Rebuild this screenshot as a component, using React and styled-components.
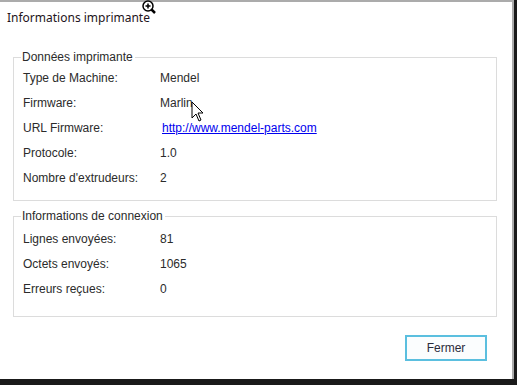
import React from "react";
import styled, { createGlobalStyle } from "styled-components";

const GlobalStyle = createGlobalStyle`
  html, body {
    margin: 0;
    padding: 0;
    background: #1a1a1a;
  }
  body {
    width: 517px;
    height: 385px;
    overflow: hidden;
  }
`;

const Screen = styled.div`
  display: flex;
  width: 517px;
  height: 385px;
  position: relative;
`;

const Window = styled.div`
  width: 512px;
  height: 377px;
  background: #ffffff;
  border-top: 2px solid #ababab;
  border-right: 2px solid #ababab;
  display: flex;
  flex-direction: column;
  font-family: "Liberation Sans", Arial, sans-serif;
  font-size: 12px;
  color: #2b2b2b;
`;

const Title = styled.div`
  font-family: "Noto Sans", "Open Sans", sans-serif;
  font-size: 12px;
  color: #1e1420;
  padding: 7px 0 0 7px;
  height: 29px;
  box-sizing: border-box;
`;

const Body = styled.div`
  display: flex;
  flex-direction: column;
  gap: 9px;
  padding: 20px 15px 0 13px;
`;

const Group = styled.fieldset`
  margin: 0;
  border: 1px solid #dcdcdc;
  padding: ${(p) => p.$top}px 0 ${(p) => p.$bottom}px 9px;
  min-width: 0;
`;

const Legend = styled.legend`
  padding: 0 2px 0 1px;
  margin-left: -2px;
  font-size: 12px;
  line-height: 13px;
  color: #2b2b2b;
`;

const Row = styled.div`
  display: grid;
  grid-template-columns: 137px 1fr;
  height: 25px;
  align-items: center;
`;

const Value = styled.span`
  color: #2b2b2b;
`;

const Link = styled.a`
  color: #0000ee;
  text-decoration: underline;
  margin-left: 2px;
  cursor: pointer;
`;

const Footer = styled.div`
  display: flex;
  justify-content: flex-end;
  padding: 18px 25px 0 0;
`;

const Button = styled.button`
  width: 82px;
  height: 26px;
  background: #fbfdfe;
  border: 2px solid #5bbfdf;
  font-family: "Liberation Sans", Arial, sans-serif;
  font-size: 12px;
  color: #2b2b3b;
  padding: 0;
`;

const Cursor = styled.svg`
  position: absolute;
  left: ${(p) => p.$x}px;
  top: ${(p) => p.$y}px;
  pointer-events: none;
`;

const printer = [
  ["Type de Machine:", "Mendel"],
  ["Firmware:", "Marlin"],
  ["URL Firmware:", "http://www.mendel-parts.com", true],
  ["Protocole:", "1.0"],
  ["Nombre d'extrudeurs:", "2"],
];

const connexion = [
  ["Lignes envoyées:", "81"],
  ["Octets envoyés:", "1065"],
  ["Erreurs reçues:", "0"],
];

const InfoRow = ({ label, value, link }) => (
  <Row>
    <span>{label}</span>
    {link ? <Link>{value}</Link> : <Value>{value}</Value>}
  </Row>
);

export default function App() {
  return (
    <>
      <GlobalStyle />
      <Screen>
        <Window>
          <Title>Informations imprimante</Title>
          <Body>
            <Group $top={1} $bottom={10}>
              <Legend>Données imprimante</Legend>
              {printer.map(([l, v, link]) => (
                <InfoRow key={l} label={l} value={v} link={link} />
              ))}
            </Group>
            <Group $top={3} $bottom={15}>
              <Legend>Informations de connexion</Legend>
              {connexion.map(([l, v]) => (
                <InfoRow key={l} label={l} value={v} />
              ))}
            </Group>
          </Body>
          <Footer>
            <Button>Fermer</Button>
          </Footer>
        </Window>
        <Cursor $x={191} $y={101} width="14" height="22" viewBox="0 0 14 22">
          <path d="M1 1 L1 17 L5 13 L8 20 L10 19 L7 12 L12 12 Z" fill="#fff" stroke="#000" strokeWidth="1" />
        </Cursor>
        <Cursor $x={141} $y={0} width="16" height="16" viewBox="0 0 16 16">
          <circle cx="7" cy="6" r="5" fill="#fff" stroke="#000" strokeWidth="1.5" />
          <path d="M7 3.5 V8.5 M4.5 6 H9.5" stroke="#000" strokeWidth="1.5" />
          <path d="M10.5 9.5 L14 13" stroke="#000" strokeWidth="2.5" />
        </Cursor>
      </Screen>
    </>
  );
}
